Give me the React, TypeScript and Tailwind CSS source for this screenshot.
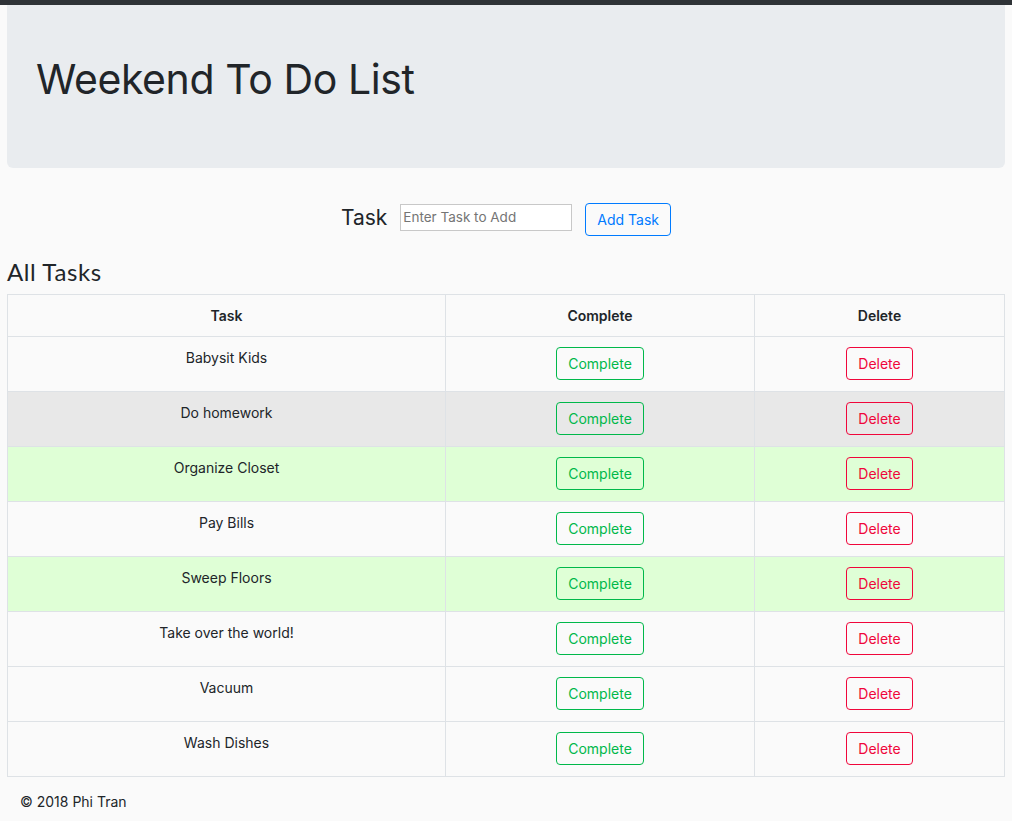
import { useState } from 'react';

type Task = { id: number; name: string; tone: 'plain' | 'gray' | 'green' };

const initial: Task[] = [
  { id: 1, name: 'Babysit Kids', tone: 'plain' },
  { id: 2, name: 'Do homework', tone: 'gray' },
  { id: 3, name: 'Organize Closet', tone: 'green' },
  { id: 4, name: 'Pay Bills', tone: 'plain' },
  { id: 5, name: 'Sweep Floors', tone: 'green' },
  { id: 6, name: 'Take over the world!', tone: 'plain' },
  { id: 7, name: 'Vacuum', tone: 'plain' },
  { id: 8, name: 'Wash Dishes', tone: 'plain' },
];

const toneClass = {
  plain: 'bg-[#fafafa]',
  gray: 'bg-[#e8e8e8]',
  green: 'bg-[#dfffd6]',
};

export default function App() {
  const [tasks, setTasks] = useState<Task[]>(initial);
  const [text, setText] = useState('');

  const add = () => {
    if (!text.trim()) return;
    setTasks([...tasks, { id: Date.now(), name: text.trim(), tone: 'plain' }]);
    setText('');
  };

  return (
    <div className="min-h-[821px] bg-[#fafafa] font-['Inter',sans-serif] text-[#212529]">
      <div className="h-[5px] bg-[#2f3337]" />
      <div className="px-[7px]">
        <div className="h-[163px] rounded-b-md bg-[#e9ecef] px-[29px] flex items-center">
          <h1 className="text-[41px] font-normal tracking-[-0.4px] leading-none -mt-[14px]">Weekend To Do List</h1>
        </div>

        <div className="mt-[35px] flex items-center justify-center">
          <label className="text-[21px] mr-[13px] -mt-[4px]">Task</label>
          <input
            value={text}
            onChange={e => setText(e.target.value)}
            placeholder="Enter Task to Add"
            className="w-[172px] h-[27px] border border-[#c8c8c8] bg-white px-[2px] text-[13.5px] placeholder:text-[#757575] outline-none -mt-[5px]"
          />
          <button onClick={add}
            className="ml-[13px] h-[33px] px-[11px] rounded border border-[#007bff] text-[14px] text-[#007bff]">
            Add Task
          </button>
        </div>

        <h2 className="mt-[24px] text-[24px] font-normal font-['Lato',sans-serif] tracking-[0.6px] leading-none">All Tasks</h2>

        <table className="mt-[10px] w-[998px] border-collapse border border-[#dee2e6] text-[14px]">
          <thead>
            <tr className="h-[42px]">
              <th className="w-[438px] border border-[#dee2e6] font-semibold">Task</th>
              <th className="w-[309px] border border-[#dee2e6] font-semibold">Complete</th>
              <th className="border border-[#dee2e6] font-semibold">Delete</th>
            </tr>
          </thead>
          <tbody>
            {tasks.map(t => (
              <tr key={t.id} className={`h-[55px] ${toneClass[t.tone]}`}>
                <td className="border border-[#dee2e6] text-center align-top pt-[10px]">{t.name}</td>
                <td className="border border-[#dee2e6] text-center align-top pt-[10px]">
                  <button
                    onClick={() => setTasks(tasks.map(x => x.id === t.id ? { ...x, tone: 'green' } : x))}
                    className="h-[33px] px-[11px] rounded border border-[#00b84a] text-[#00b84a]">
                    Complete
                  </button>
                </td>
                <td className="border border-[#dee2e6] text-center align-top pt-[10px]">
                  <button
                    onClick={() => setTasks(tasks.filter(x => x.id !== t.id))}
                    className="h-[33px] px-[11px] rounded border border-[#f0063b] text-[#f0063b]">
                    Delete
                  </button>
                </td>
              </tr>
            ))}
          </tbody>
        </table>

        <footer className="mt-[14px] pl-[13px] text-[14px]">© 2018 Phi Tran</footer>
      </div>
    </div>
  );
}
